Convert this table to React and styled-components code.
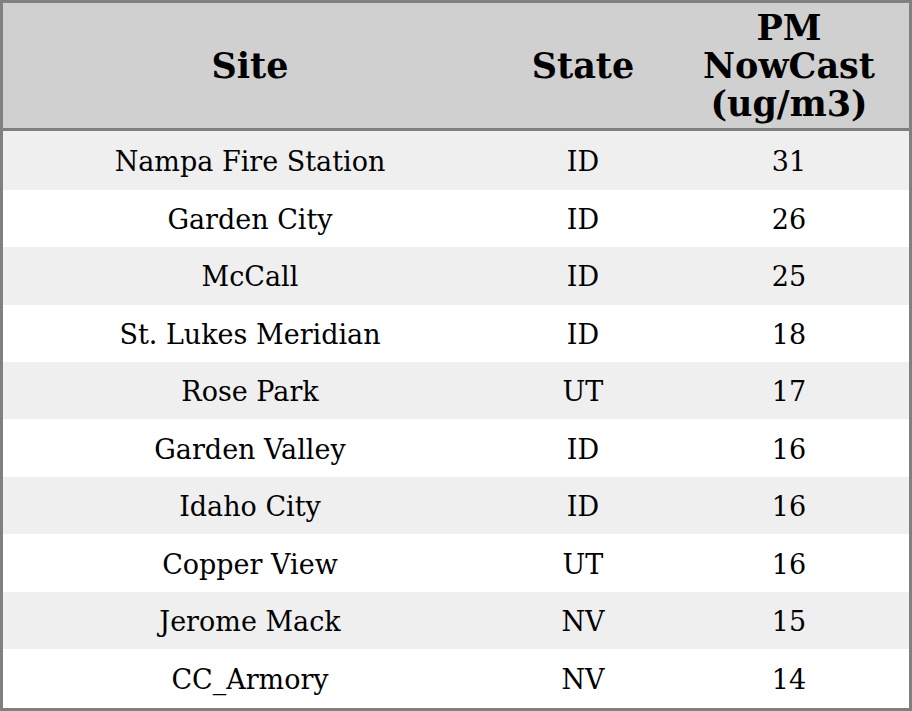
import React from "react";
import styled, { createGlobalStyle } from "styled-components";

const rows = [
  ["Nampa Fire Station", "ID", 31],
  ["Garden City", "ID", 26],
  ["McCall", "ID", 25],
  ["St. Lukes Meridian", "ID", 18],
  ["Rose Park", "UT", 17],
  ["Garden Valley", "ID", 16],
  ["Idaho City", "ID", 16],
  ["Copper View", "UT", 16],
  ["Jerome Mack", "NV", 15],
  ["CC_Armory", "NV", 14],
];

const GlobalStyle = createGlobalStyle`
  html, body {
    margin: 0;
    padding: 0;
    background: #ffffff;
  }
`;

const Table = styled.table`
  width: 912px;
  height: 711px;
  border-collapse: collapse;
  border: 3px solid #808080;
  font-family: "DejaVu Serif", serif;
  color: #000;
  table-layout: fixed;
`;

const HeadRow = styled.tr`
  height: 128px;
  background: #d0d0d0;
  border-bottom: 3px solid #808080;
`;

const Th = styled.th`
  width: ${(p) => p.$w}px;
  font-size: 35px;
  font-weight: bold;
  line-height: 38px;
  text-align: center;
  padding: 0 0 0 0;
`;

const Row = styled.tr`
  background: ${(p) => (p.$odd ? "#efefef" : "#ffffff")};
`;

const Td = styled.td`
  font-size: 27px;
  text-align: center;
  padding: 2px 0 0 0;
`;

export default function App() {
  return (
    <>
      <GlobalStyle />
      <Table>
        <thead>
          <HeadRow>
            <Th $w={494}>Site</Th>
            <Th $w={172}>State</Th>
            <Th $w={240}>
              PM
              <br />
              NowCast
              <br />
              (ug/m3)
            </Th>
          </HeadRow>
        </thead>
        <tbody>
          {rows.map(([site, state, pm], i) => (
            <Row key={site} $odd={i % 2 === 0}>
              <Td>{site}</Td>
              <Td>{state}</Td>
              <Td>{pm}</Td>
            </Row>
          ))}
        </tbody>
      </Table>
    </>
  );
}
